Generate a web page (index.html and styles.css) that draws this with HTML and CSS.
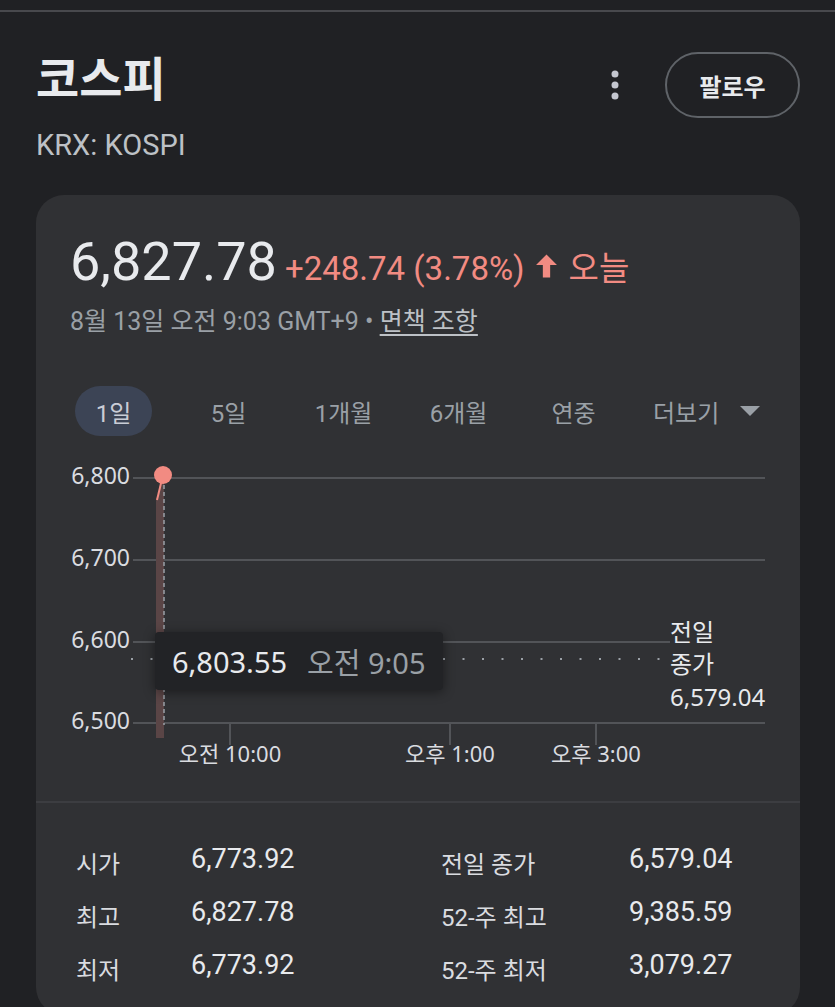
FILE: index.html
```html
<!DOCTYPE html>
<html lang="ko">
<head>
    <meta charset="utf-8">
    <title>코스피 - KRX: KOSPI</title>
    <link rel="stylesheet" href="styles.css">
</head>
<body>
    <div class="topbar"></div>

    <div class="header">
        <div class="title-block">
            <h1 class="title">코스피</h1>
            <div class="ticker">KRX: KOSPI</div>
        </div>
        <div class="actions">
            <svg class="kebab" width="10" height="30" viewBox="0 0 10 30">
                <circle cx="5" cy="4" r="3.5"/>
                <circle cx="5" cy="15" r="3.5"/>
                <circle cx="5" cy="26" r="3.5"/>
            </svg>
            <button class="follow" type="button">팔로우</button>
        </div>
    </div>

    <div class="card">
        <div class="card-top">
            <div class="quote">
                <span class="price">6,827.78</span>
                <span class="change">+248.74 (3.78%)</span>
                <svg class="arrow" width="23" height="26" viewBox="0 0 22 24">
                    <path d="M11 1L21 11h-6.5v12h-7V11H1z"/>
                </svg>
                <span class="change">오늘</span>
            </div>
            <div class="meta">8월 13일 오전 9:03 GMT+9 • <a class="disclaimer" href="#">면책 조항</a></div>

            <div class="tabs">
                <div class="tab"><span class="pill active">1일</span></div>
                <div class="tab"><span class="pill">5일</span></div>
                <div class="tab"><span class="pill">1개월</span></div>
                <div class="tab"><span class="pill">6개월</span></div>
                <div class="tab"><span class="pill">연중</span></div>
                <div class="tab more">
                    <span class="pill">더보기</span>
                    <svg width="20" height="10" viewBox="0 0 20 10"><path d="M0 0h20l-10 10z"/></svg>
                </div>
            </div>
        </div>

        <div class="chart">
            <svg class="plot" width="764" height="320" viewBox="0 0 764 320">
                <g class="grid">
                    <line x1="97" y1="18" x2="729" y2="18"/>
                    <line x1="97" y1="100" x2="729" y2="100"/>
                    <line x1="97" y1="182" x2="634" y2="182"/>
                    <line x1="97" y1="263" x2="729" y2="263"/>
                    <line x1="194" y1="263" x2="194" y2="285"/>
                    <line x1="414" y1="263" x2="414" y2="285"/>
                    <line x1="560" y1="263" x2="560" y2="285"/>
                </g>
                <line class="prev-close" x1="95" y1="199" x2="632" y2="199"/>
                <g class="y-labels">
                    <text x="94" y="24">6,800</text>
                    <text x="94" y="106">6,700</text>
                    <text x="94" y="188">6,600</text>
                    <text x="94" y="269">6,500</text>
                </g>
                <g class="x-labels">
                    <text x="194" y="302">오전 10:00</text>
                    <text x="414" y="302">오후 1:00</text>
                    <text x="560" y="302">오후 3:00</text>
                </g>
                <g class="close-label">
                    <text x="634" y="181">전일</text>
                    <text x="634" y="213">종가</text>
                    <text x="634" y="246">6,579.04</text>
                </g>
                <polygon class="area" points="120,40 120,278 128,278 128,18"/>
                <line class="cursor" x1="128" y1="18" x2="128" y2="265"/>
                <polyline class="series" points="127,15 121,40"/>
                <circle class="dot" cx="127" cy="15" r="9"/>
            </svg>
            <div class="tooltip">
                <span class="tip-value">6,803.55</span>
                <span class="tip-time">오전 9:05</span>
            </div>
        </div>

        <div class="stats">
            <div class="label">시가</div>
            <div class="value">6,773.92</div>
            <div class="label">전일 종가</div>
            <div class="value">6,579.04</div>

            <div class="label">최고</div>
            <div class="value">6,827.78</div>
            <div class="label">52-주 최고</div>
            <div class="value">9,385.59</div>

            <div class="label">최저</div>
            <div class="value">6,773.92</div>
            <div class="label">52-주 최저</div>
            <div class="value">3,079.27</div>
        </div>
    </div>
</body>
</html>
```

FILE: styles.css
```css
body {
    margin: 0;
    background-color: #202124;
    color: #e8eaed;
    font-family: Roboto, "Noto Sans CJK KR", sans-serif;
    overflow: hidden;
}
.topbar {
    height: 10px;
    border-bottom: 2px solid #48494d;
}
.header {
    display: flex;
    justify-content: space-between;
    align-items: flex-start;
    padding: 40px 35px 0 36px;
}
.title {
    margin: 0;
    font-size: 47px;
    line-height: 56px;
    font-weight: 700;
    color: #e8eaed;
}
.ticker {
    margin-top: 19px;
    font-size: 29px;
    line-height: 36px;
    color: #bdc1c6;
}
.actions {
    display: flex;
    align-items: center;
    gap: 45px;
}
.kebab {
    fill: #c4c7d0;
}
.follow {
    width: 135px;
    height: 66px;
    border: 2px solid #5f6368;
    border-radius: 33px;
    background: transparent;
    color: #e8eaed;
    font-family: "Noto Sans CJK KR", sans-serif;
    font-size: 24px;
    font-weight: 700;
    cursor: pointer;
}

.card {
    margin: 32px 35px 0 36px;
    background-color: #303134;
    border-radius: 28px;
}
.card-top {
    padding: 37px 34px 0;
}
.quote {
    display: flex;
    align-items: baseline;
    height: 60px;
    line-height: 60px;
}
.price {
    font-size: 54px;
    color: #e8eaed;
    margin-right: 8px;
}
.change {
    font-size: 33px;
    color: #f28b82;
}
.arrow {
    fill: #f28b82;
    align-self: center;
    margin: 8px 11px 0 10px;
}
.meta {
    margin-top: 14px;
    font-size: 25px;
    line-height: 32px;
    color: #9aa0a6;
}
.disclaimer {
    color: #bdc1c6;
    text-decoration: underline;
    text-underline-offset: 4px;
}

.tabs {
    display: grid;
    grid-template-columns: repeat(5, 115px) 1fr;
    margin: 48px 0 0 -14px;
    height: 50px;
}
.tab {
    display: flex;
    justify-content: center;
    align-items: center;
}
.pill {
    display: flex;
    align-items: center;
    justify-content: center;
    height: 50px;
    padding: 0 21px;
    border-radius: 25px;
    font-size: 24px;
    color: #9aa0a6;
}
.pill.active {
    background-color: #3c4455;
    color: #c9cdd6;
}
.tab.more {
    justify-content: flex-start;
    padding-left: 1px;
}
.tab.more svg {
    fill: #9aa0a6;
}

.chart {
    position: relative;
    margin-top: 24px;
    height: 320px;
    padding-bottom: 21px;
}
.plot {
    display: block;
}
.grid line {
    stroke: #525458;
    stroke-width: 2;
}
.prev-close {
    stroke: #9aa0a6;
    stroke-width: 2;
    stroke-dasharray: 2 17.5;
}
.y-labels text {
    font-family: "Noto Sans", sans-serif;
    font-size: 23px;
    fill: #dadce0;
    text-anchor: end;
}
.x-labels text {
    font-family: "Noto Sans", "Noto Sans CJK KR", sans-serif;
    font-size: 22px;
    fill: #dadce0;
    text-anchor: middle;
}
.close-label text {
    font-family: "Noto Sans", "Noto Sans CJK KR", sans-serif;
    font-size: 24px;
    fill: #e8eaed;
}
.area {
    fill: #5a4546;
}
.cursor {
    stroke: #9aa0a6;
    stroke-width: 1.5;
    stroke-dasharray: 4 3;
}
.series {
    fill: none;
    stroke: #f28b82;
    stroke-width: 2;
}
.dot {
    fill: #f28b82;
}
.tooltip {
    position: absolute;
    left: 119px;
    top: 172px;
    width: 288px;
    height: 58px;
    display: flex;
    align-items: center;
    gap: 20px;
    padding: 0 17px;
    box-sizing: border-box;
    background-color: #222326;
    border-radius: 4px;
    box-shadow: 0 2px 12px rgba(0, 0, 0, 0.45);
    font-family: "Noto Sans", "Noto Sans CJK KR", sans-serif;
}
.tip-value {
    font-size: 29px;
    color: #e8eaed;
}
.tip-time {
    font-size: 29px;
    color: #9aa0a6;
}

.stats {
    display: grid;
    grid-template-columns: 115px 250px 188px 1fr;
    grid-auto-rows: 53px;
    align-items: center;
    padding: 33px 0 20px 40px;
    border-top: 2px solid #3c3d41;
}
.label {
    font-size: 24px;
    color: #dadce0;
}
.value {
    font-size: 27px;
    color: #e8eaed;
    margin-top: -8px;
}
```
